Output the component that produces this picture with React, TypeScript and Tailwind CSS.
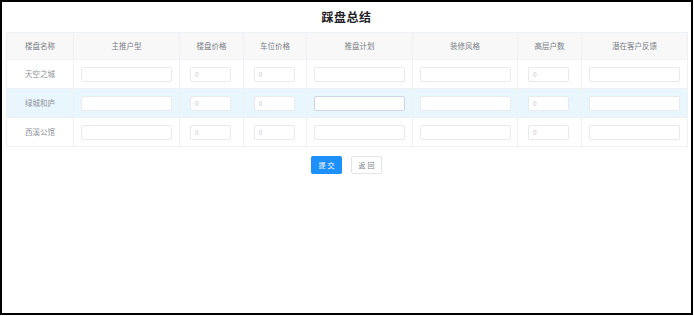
const COLUMNS = [
  { title: "楼盘名称", width: 67 },
  { title: "主推户型", width: 106 },
  { title: "楼盘价格", width: 64 },
  { title: "车位价格", width: 63 },
  { title: "推盘计划", width: 106 },
  { title: "装修风格", width: 105 },
  { title: "高层户数", width: 64 },
  { title: "潜在客户反馈", width: 106 },
];

const ROWS = ["天空之城", "绿城和庐", "西溪公馆"];

// which columns hold a number input ("0") rather than a text one
const NUMERIC = [false, true, true, false, false, true, false];

function TextInput({ focused }: { focused?: boolean }) {
  return (
    <input
      type="text"
      className={`w-[91px] h-[15px] bg-white rounded-[2px] border outline-none text-[7px] px-1 ${
        focused ? "border-[#cdd6e2]" : "border-[#e8eaed]"
      }`}
    />
  );
}

function NumInput() {
  return (
    <input
      type="text"
      placeholder="0"
      className="w-[41px] h-[15px] bg-white rounded-[2px] border border-[#e8eaed] outline-none text-[6.5px] px-[4px] placeholder:text-[#bfc3c9]"
    />
  );
}

export default function App() {
  return (
    <div
      className="w-[693px] h-[315px] border-2 border-black bg-white flex flex-col"
      style={{ fontFamily: '"Noto Sans CJK SC", "Noto Sans", sans-serif' }}
    >
      <div className="h-[30px] flex items-center justify-center">
        <h1 className="text-[12px] font-bold text-[#1f2329] tracking-[0.5px]">踩盘总结</h1>
      </div>

      <div className="px-[4px]">
        <table className="w-[681px] table-fixed border-collapse">
          <colgroup>
            {COLUMNS.map((c) => (
              <col key={c.title} style={{ width: c.width }} />
            ))}
          </colgroup>
          <thead>
            <tr className="h-[27px] bg-[#f8f8f9]">
              {COLUMNS.map((c) => (
                <th
                  key={c.title}
                  className="border border-[#f0f1f3] text-[7.5px] font-normal text-[#7a7e85] text-center"
                >
                  {c.title}
                </th>
              ))}
            </tr>
          </thead>
          <tbody>
            {ROWS.map((name, i) => (
              <tr key={name} className={`h-[29px] ${i === 1 ? "bg-[#eaf6fe]" : "bg-white"}`}>
                <td className="border border-[#f0f1f3] text-center text-[7.5px] text-[#90949a]">{name}</td>
                {NUMERIC.map((num, j) => (
                  <td key={j} className="border border-[#f0f1f3]">
                    <div className={`flex justify-center ${num ? "pr-[2px]" : ""}`}>
                      {num ? <NumInput /> : <TextInput focused={i === 1 && j === 3} />}
                    </div>
                  </td>
                ))}
              </tr>
            ))}
          </tbody>
        </table>
      </div>

      <div className="flex justify-center gap-[9px] mt-[9px]">
        <button className="w-[31px] h-[18px] rounded-[2px] bg-[#1e90fa] text-white text-[7px] tracking-[2px] pl-[2px]">
          提交
        </button>
        <button className="w-[31px] h-[18px] rounded-[2px] bg-white border border-[#e3e5e8] text-[#7a7e85] text-[7px] tracking-[2px] pl-[2px]">
          返回
        </button>
      </div>
    </div>
  );
}
